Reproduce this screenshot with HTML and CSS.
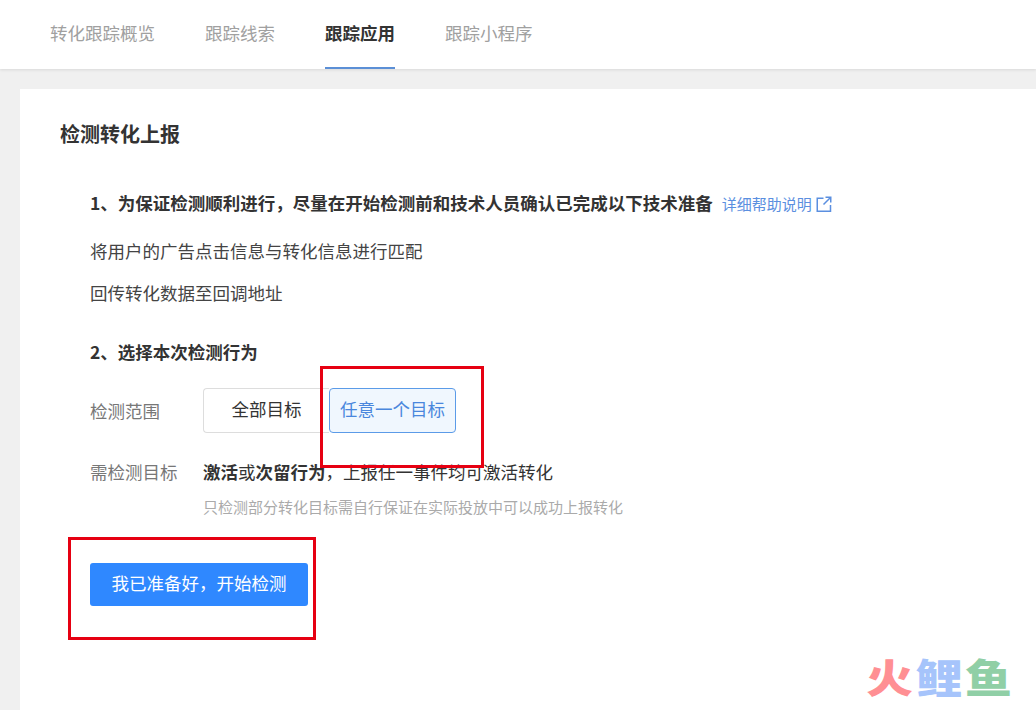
FILE: index.html
```html
<!DOCTYPE html>
<html lang="zh-CN">
<head>
<meta charset="utf-8">
<title>检测转化上报</title>
<link rel="stylesheet" href="styles.css">
</head>
<body>
<header class="tabs">
  <a class="tab">转化跟踪概览</a>
  <a class="tab">跟踪线索</a>
  <a class="tab tab-active">跟踪应用</a>
  <a class="tab">跟踪小程序</a>
</header>
<main class="card">
  <h1 class="title">检测转化上报</h1>
  <section class="step">
    <div class="step-head">
      <h2 class="step-title">1、为保证检测顺利进行，尽量在开始检测前和技术人员确认已完成以下技术准备</h2>
      <a class="help">详细帮助说明
        <svg class="help-icon" viewBox="0 0 16 16" width="16" height="16" fill="none" stroke="currentColor" stroke-width="1.5">
          <path d="M7.5 2.25H1.25v13H14.5V9"/>
          <path d="M9.5 1.25h5.25V6.5M14.5 1.5L7.5 8.5"/>
        </svg>
      </a>
    </div>
    <p class="line line-first">将用户的广告点击信息与转化信息进行匹配</p>
    <p class="line">回传转化数据至回调地址</p>
  </section>
  <section class="step step-two">
    <h2 class="step-title">2、选择本次检测行为</h2>
    <div class="field field-range">
      <span class="label">检测范围</span>
      <div class="segment">
        <span class="seg-item">全部目标</span>
        <span class="seg-item seg-active">任意一个目标</span>
      </div>
    </div>
    <div class="field field-target">
      <span class="label">需检测目标</span>
      <div class="target">
        <p class="target-text"><b>激活</b>或<b>次留行为</b>，上报任一事件均可激活转化</p>
        <p class="hint">只检测部分转化目标需自行保证在实际投放中可以成功上报转化</p>
      </div>
    </div>
  </section>
  <button class="primary" type="button">我已准备好，开始检测</button>
</main>
<div class="mark mark-a"></div>
<div class="mark mark-b"></div>
<div class="logo"><span class="logo-r">火</span><span class="logo-b">鲤</span><span class="logo-g">鱼</span></div>
</body>
</html>
```
FILE: styles.css
```css
* { box-sizing: border-box; }
html, body { margin: 0; height: 100%; }
body {
  position: relative;
  width: 1036px;
  height: 710px;
  overflow: hidden;
  background: #f0f0f0;
  color: #333;
  font-family: "Noto Sans CJK SC", "Liberation Sans", sans-serif;
  font-size: 17.5px;
  display: flex;
  flex-direction: column;
}
.tabs {
  flex: none;
  height: 69px;
  padding-left: 50px;
  display: flex;
  gap: 50px;
  background: #fff;
  box-shadow: 0 1px 3px rgba(0,0,0,.1);
}
.tab {
  height: 69px;
  line-height: 66px;
  color: #a0a0a0;
  font-size: 17.5px;
}
.tab-active {
  color: #333;
  font-weight: 700;
  border-bottom: 2px solid #5b8fd6;
}
.card {
  flex: 1;
  margin: 20px 0 0 20px;
  padding: 31px 0 0 40px;
  background: #fff;
}
.title {
  margin: 0;
  font-size: 20px;
  line-height: 28px;
  font-weight: 700;
  color: #333;
}
.step { padding-left: 30px; }
.step-head {
  margin-top: 41px;
  display: flex;
  align-items: center;
  gap: 9px;
  height: 28px;
}
.step-title {
  margin: 0;
  font-size: 17.5px;
  line-height: 28px;
  font-weight: 700;
  color: #333;
}
.help {
  display: flex;
  align-items: center;
  gap: 4px;
  font-size: 15px;
  color: #5b8fe0;
}
.help-icon { flex: none; margin-top: 1px; }
.line {
  margin: 14px 0 0;
  line-height: 28px;
  color: #444;
}
.line-first { margin-top: 20px; }
.step-two { margin-top: 31px; }
.field { display: flex; align-items: flex-start; }
.field-range { margin-top: 22px; }
.field-target { margin-top: 25px; }
.label {
  width: 113px;
  flex: none;
  color: #777;
  line-height: 28px;
}
.field-range .label { padding-top: 9px; }
.segment { display: flex; }
.seg-item {
  height: 45px;
  line-height: 40px;
  text-align: center;
  border: 1px solid #ddd;
}
.seg-item:first-child {
  width: 126px;
  border-right: 0;
  border-radius: 4px 0 0 4px;
  color: #333;
}
.seg-active {
  width: 127px;
  border-color: #5b9be8;
  border-radius: 4px;
  background: #f0f7fe;
  color: #4a87dd;
}
.target-text { margin: 0; line-height: 28px; color: #333; }
.target-text b { font-weight: 700; }
.hint {
  margin: 11px 0 0;
  font-size: 15px;
  line-height: 20px;
  color: #aaa;
}
.primary {
  display: block;
  margin: 46px 0 0 30px;
  padding: 0 0 4px;
  width: 218px;
  height: 43px;
  border: 0;
  border-radius: 3px;
  background: #2f88ff;
  color: #fff;
  font: inherit;
}
.mark {
  position: absolute;
  border: 3px solid #e60012;
}
.mark-a { left: 320px; top: 366px; width: 164px; height: 102px; }
.mark-b { left: 68px; top: 537px; width: 248px; height: 103px; }
.logo {
  position: absolute;
  left: 866px;
  top: 655px;
  display: flex;
  gap: 2.5px;
  font-family: "Liberation Sans", "Noto Sans CJK SC", sans-serif;
  font-size: 47px;
  line-height: 48px;
  font-weight: 900;
  transform: scaleY(.85);
}
.logo-r { color: #ff8f93; }
.logo-b { color: #a6c4fb; }
.logo-g { color: #90cfa6; }
```
